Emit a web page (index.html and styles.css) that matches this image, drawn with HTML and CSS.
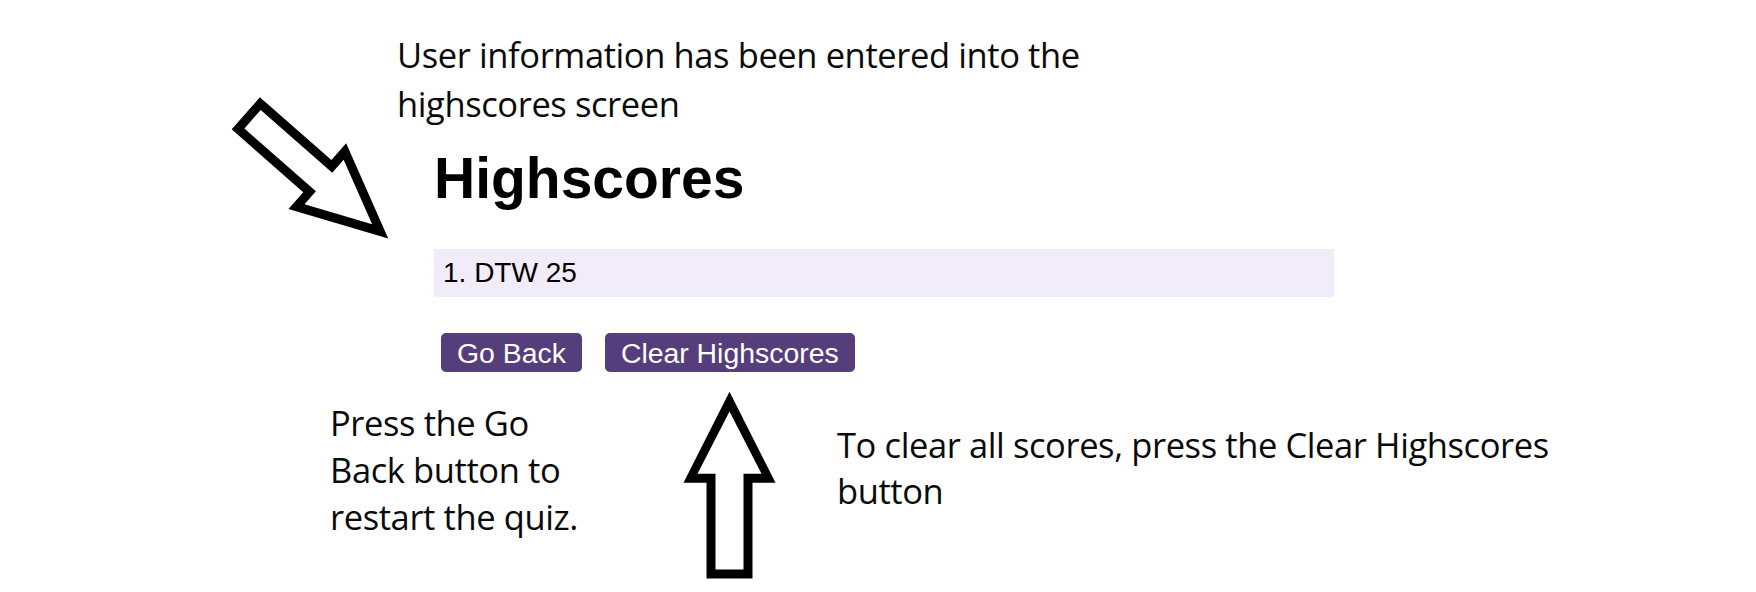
FILE: index.html
```html
<!DOCTYPE html>
<html lang="en">
<head>
<meta charset="utf-8">
<title>Highscores annotated</title>
<link rel="stylesheet" href="styles.css">
</head>
<body>
<div class="stage">
  <svg class="arrow-diag" width="180" height="165" viewBox="0 0 180 165" aria-hidden="true">
    <g transform="translate(25.8 28.3) rotate(41.3)">
      <path fill="#000" fill-rule="evenodd" d="M0,-21.35 H95.2 V-43.7 L189.6,0 L95.2,43.7 V21.35 H0 Z M9,-12.35 H104.2 V-29.61 L168.2,0 L104.2,29.61 V12.35 H9 Z"/>
    </g>
  </svg>

  <p class="note note-top">User information has been entered into the<br>highscores screen</p>

  <section class="panel">
    <h1 class="title">Highscores</h1>
    <ol class="scores">
      <li class="score">1. DTW 25</li>
    </ol>
    <div class="actions">
      <button class="btn">Go Back</button>
      <button class="btn">Clear Highscores</button>
    </div>
  </section>

  <div class="bottom">
    <p class="note note-left">Press the Go<br>Back button to<br>restart the quiz.</p>
    <svg class="arrow-up" width="94" height="189" viewBox="0 0 94 189" aria-hidden="true">
      <path fill="#000" fill-rule="evenodd" d="M46.5,0.7 L92.5,91.7 H69.5 V187.5 H23.5 V91.7 H0.5 Z M46.5,20.4 L78.5,82.7 H60.5 V178.5 H32.5 V82.7 H14.5 Z"/>
    </svg>
    <p class="note note-right">To clear all scores, press the Clear Highscores<br>button</p>
  </div>
</div>
</body>
</html>
```

FILE: styles.css
```css
html, body {
  margin: 0;
  padding: 0;
  background: #ffffff;
}

body {
  width: 1756px;
  height: 592px;
  overflow: hidden;
  color: #000;
}

.stage {
  position: relative;
  width: 1756px;
  height: 592px;
  padding-top: 30px;
  box-sizing: border-box;
}

.arrow-diag {
  position: absolute;
  left: 220px;
  top: 85px;
}

.note {
  margin: 0;
  font-family: "Open Sans", "Noto Sans", sans-serif;
  font-size: 34.5px;
  letter-spacing: -0.4px;
  line-height: 49px;
  color: #0a0a0a;
}

.note-top {
  margin-left: 397px;
}

.panel {
  margin-left: 434px;
  width: 900px;
  margin-top: 18px;
  font-family: "Liberation Sans", Arial, sans-serif;
}

.title {
  margin: 0;
  font-size: 57px;
  line-height: 64px;
  font-weight: bold;
}

.scores {
  list-style: none;
  margin: 39px 0 0;
  padding: 0;
}

.score {
  background: #f2ecfa;
  font-size: 28px;
  line-height: 32px;
  padding: 8px 9px;
}

.actions {
  display: flex;
  gap: 23px;
  margin-top: 36px;
  margin-left: 7px;
}

.btn {
  font-family: "Liberation Sans", Arial, sans-serif;
  font-size: 28.4px;
  line-height: 32px;
  padding: 3.5px 16px;
  border: 0;
  border-radius: 5px;
  background: #563d7c;
  color: #ffffff;
}

.bottom {
  display: flex;
  align-items: flex-start;
  margin-top: 19px;
  margin-left: 330px;
}

.note-left {
  width: 353px;
  flex: none;
  margin-top: 8px;
  line-height: 47px;
}

.arrow-up {
  flex: none;
}

.note-right {
  margin-left: 60px;
  margin-top: 31px;
  line-height: 46px;
}
```
